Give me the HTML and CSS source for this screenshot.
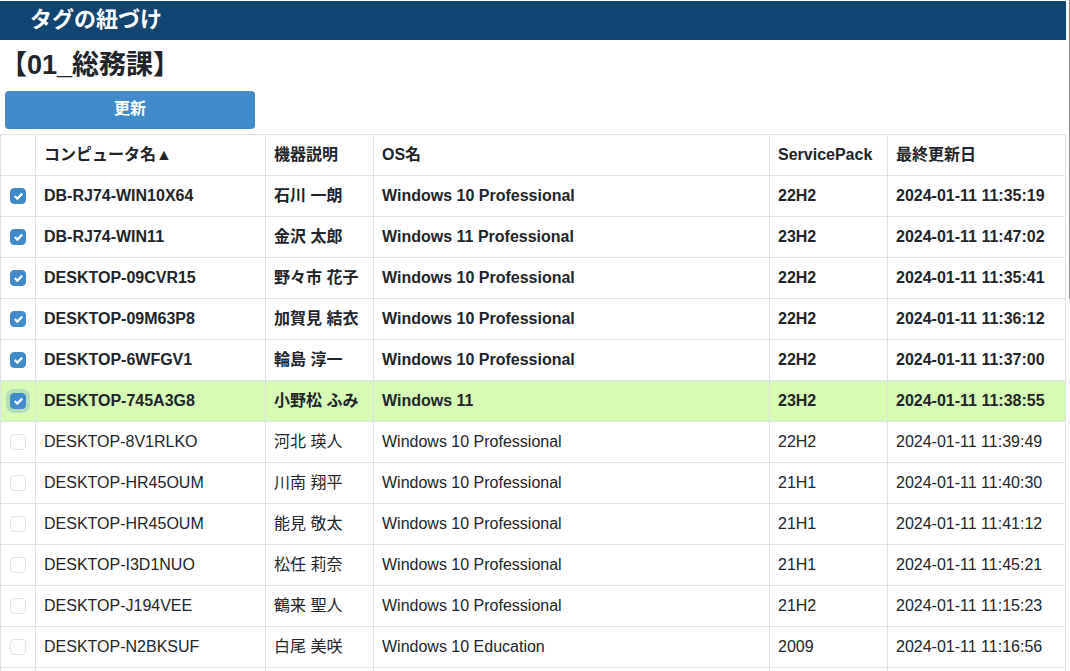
FILE: index.html
```html
<!DOCTYPE html>
<html lang="ja">
<head>
  <meta charset="UTF-8">
  <meta name="viewport" content="width=device-width, initial-scale=1.0">
  <title>タグの紐づけ</title>
  <link rel="stylesheet" href="styles.css">
</head>
<body>

  <main class="page">
    <header class="title-bar">タグの紐づけ</header>
    <h1>【01_総務課】</h1>
    <button type="button" class="update-btn">更新</button>

    <table class="computers">
      <colgroup>
        <col class="col-check">
        <col class="col-name">
        <col class="col-note">
        <col class="col-os">
        <col class="col-sp">
        <col class="col-date">
      </colgroup>
      <thead>
        <tr><th></th><th>コンピュータ名▲</th><th>機器説明</th><th>OS名</th><th>ServicePack</th><th>最終更新日</th></tr>
      </thead>
      <tbody>
        <tr class="checked">
          <td><input type="checkbox" id="pc1" checked></td>
          <td><label for="pc1">DB-RJ74-WIN10X64</label></td>
          <td>石川 一朗</td><td>Windows 10 Professional</td><td>22H2</td><td>2024-01-11 11:35:19</td>
        </tr>
        <tr class="checked">
          <td><input type="checkbox" id="pc2" checked></td>
          <td><label for="pc2">DB-RJ74-WIN11</label></td>
          <td>金沢 太郎</td><td>Windows 11 Professional</td><td>23H2</td><td>2024-01-11 11:47:02</td>
        </tr>
        <tr class="checked">
          <td><input type="checkbox" id="pc3" checked></td>
          <td><label for="pc3">DESKTOP-09CVR15</label></td>
          <td>野々市 花子</td><td>Windows 10 Professional</td><td>22H2</td><td>2024-01-11 11:35:41</td>
        </tr>
        <tr class="checked">
          <td><input type="checkbox" id="pc4" checked></td>
          <td><label for="pc4">DESKTOP-09M63P8</label></td>
          <td>加賀見 結衣</td><td>Windows 10 Professional</td><td>22H2</td><td>2024-01-11 11:36:12</td>
        </tr>
        <tr class="checked">
          <td><input type="checkbox" id="pc5" checked></td>
          <td><label for="pc5">DESKTOP-6WFGV1</label></td>
          <td>輪島 淳一</td><td>Windows 10 Professional</td><td>22H2</td><td>2024-01-11 11:37:00</td>
        </tr>
        <tr class="checked active">
          <td><input type="checkbox" id="pc6" checked></td>
          <td><label for="pc6">DESKTOP-745A3G8</label></td>
          <td>小野松 ふみ</td><td>Windows 11</td><td>23H2</td><td>2024-01-11 11:38:55</td>
        </tr>
        <tr>
          <td><input type="checkbox" id="pc7"></td>
          <td><label for="pc7">DESKTOP-8V1RLKO</label></td>
          <td>河北 瑛人</td><td>Windows 10 Professional</td><td>22H2</td><td>2024-01-11 11:39:49</td>
        </tr>
        <tr>
          <td><input type="checkbox" id="pc8"></td>
          <td><label for="pc8">DESKTOP-HR45OUM</label></td>
          <td>川南 翔平</td><td>Windows 10 Professional</td><td>21H1</td><td>2024-01-11 11:40:30</td>
        </tr>
        <tr>
          <td><input type="checkbox" id="pc9"></td>
          <td><label for="pc9">DESKTOP-HR45OUM</label></td>
          <td>能見 敬太</td><td>Windows 10 Professional</td><td>21H1</td><td>2024-01-11 11:41:12</td>
        </tr>
        <tr>
          <td><input type="checkbox" id="pc10"></td>
          <td><label for="pc10">DESKTOP-I3D1NUO</label></td>
          <td>松任 莉奈</td><td>Windows 10 Professional</td><td>21H1</td><td>2024-01-11 11:45:21</td>
        </tr>
        <tr>
          <td><input type="checkbox" id="pc11"></td>
          <td><label for="pc11">DESKTOP-J194VEE</label></td>
          <td>鶴来 聖人</td><td>Windows 10 Professional</td><td>21H2</td><td>2024-01-11 11:15:23</td>
        </tr>
        <tr>
          <td><input type="checkbox" id="pc12"></td>
          <td><label for="pc12">DESKTOP-N2BKSUF</label></td>
          <td>白尾 美咲</td><td>Windows 10 Education</td><td>2009</td><td>2024-01-11 11:16:56</td>
        </tr>
        <tr><td></td><td></td><td></td><td></td><td></td><td></td></tr>
      </tbody>
    </table>
  </main>

  <div class="scrollbar"><div class="thumb"></div></div>

</body>
</html>
```
FILE: styles.css
```css
* {
  box-sizing: border-box;
}

body {
  margin: 0;
  display: flex;
  height: 100vh;
  background-color: #fff;
  color: #212529;
  font-family: "Liberation Sans", "Noto Sans CJK JP", sans-serif;
  font-size: 16px;
  line-height: 24px;
}

/* scrolls by itself, the thin bar on the right is drawn by .scrollbar */
.page {
  flex: 1;
  min-width: 0;
  padding-top: 1px;
  overflow: auto;
  scrollbar-width: none;
}

.title-bar {
  height: 39px;
  padding-left: 30px;
  background-color: #114672;
  color: #fff;
  font-size: 22px;
  font-weight: bold;
  line-height: 38px;
}

h1 {
  margin: 8px 0;
  font-size: 27px;
  line-height: 35px;
}

.update-btn {
  display: block;
  width: 250px;
  height: 38px;
  margin: 0 5px 5px;
  padding: 0 0 2px;
  border: none;
  border-radius: 4px;
  background-color: #428bca;
  color: #fff;
  font: inherit;
  font-weight: bold;
  cursor: pointer;
}

.computers {
  width: 100%;
  table-layout: fixed;
  border-collapse: collapse;
}

.computers th,
.computers td {
  height: 41px;
  padding: 0 8px;
  border: 1px solid #dee2e6;
  line-height: 24px;
  text-align: left;
  white-space: nowrap;
}

.col-check { width: 35px; }
.col-name { width: 230px; }
.col-note { width: 108px; }
.col-sp { width: 118px; }
.col-date { width: 178px; }

.checked {
  font-weight: bold;
}

.active {
  background-color: #d7fbb5;
}

input[type="checkbox"] {
  appearance: none;
  display: block;
  width: 16px;
  height: 16px;
  margin: 0 0 0 1px;
  border: 1px solid #dee2e6;
  border-radius: 4px;
  background-color: #fff;
}

input[type="checkbox"]:checked {
  border-color: #428bca;
  background: #428bca url("data:image/svg+xml,%3Csvg xmlns='http://www.w3.org/2000/svg' viewBox='0 0 8 8'%3E%3Cpath fill='%23fff' d='M6.564.75l-3.59 3.612-1.538-1.55L0 4.26 2.974 7.25 8 2.193z'/%3E%3C/svg%3E") center / 9px 9px no-repeat;
}

.active input[type="checkbox"] {
  box-shadow: 0 0 0 4px rgba(66, 139, 202, 0.25);
}

.scrollbar {
  width: 4px;
  padding-left: 3px;
  background-color: #fcfcfc;
}

.thumb {
  height: 299px;
  background-color: #8b8b8b;
}

@media (max-width: 768px) {
  .computers {
    min-width: 900px;
  }
}
```
